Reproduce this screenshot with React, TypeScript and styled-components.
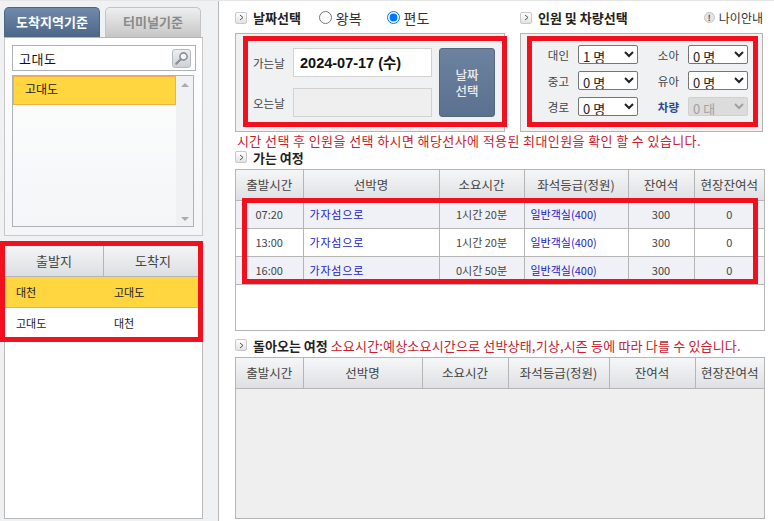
import * as React from 'react'
import styled, { createGlobalStyle } from 'styled-components'

const GlobalStyle = createGlobalStyle`
  html, body { margin: 0; padding: 0; background: #fff; }
  body {
    width: 774px;
    height: 521px;
    overflow: hidden;
    font-family: "Noto Sans CJK KR", "Noto Sans", sans-serif;
    color: #333;
  }
  * { box-sizing: border-box; }
`

const SPage = styled.div`
  display: flex;
  width: 774px;
  height: 521px;
  border-top: 1px solid #e6e6e6;
`

const SSidebar = styled.aside`
  width: 219px;
  height: 520px;
  flex: none;
  padding: 6px 15px 0 4px;
  background: #f0f1f3;
  border-right: 1px solid #b9b9b9;
  display: flex;
  flex-direction: column;
`

const STabs = styled.div`
  display: flex;
  gap: 5px;
  height: 30px;
`

const STab = styled.div<{ $active?: boolean }>`
  width: 96px;
  height: 30px;
  border: 1px solid ${({ $active }) => ($active ? '#4d6584' : '#c4c4c4')};
  border-bottom: 0;
  border-radius: 5px 5px 0 0;
  background: ${({ $active }) =>
    $active ? 'linear-gradient(#6f8aab, #4c6688)' : 'linear-gradient(#efefef, #c6c6c6)'};
  color: ${({ $active }) => ($active ? '#fff' : '#8a8a8a')};
  font-size: 13px;
  font-weight: 700;
  line-height: 28px;
  text-align: center;
`

const SSearchPanel = styled.div`
  width: 199px;
  height: 199px;
  padding: 7px 7px 0 7px;
  background: linear-gradient(#fff, #f4f5f7);
  border: 1px solid #c8c8c8;
  border-top: 1px solid #b5b5b5;
`

const SSearchBox = styled.div`
  width: 184px;
  height: 26px;
  padding: 0 4px 0 6px;
  display: flex;
  align-items: center;
  justify-content: space-between;
  background: #fff;
  border: 1px solid #aeb1b5;
  font-size: 13px;
  letter-spacing: 0.6px;
  color: #111;
`

const SSearchButton = styled.div`
  width: 19px;
  height: 19px;
  display: flex;
  align-items: center;
  justify-content: center;
  background: linear-gradient(#eceef0, #cfd2d6);
  border: 1px solid #b5b8bc;
  border-radius: 3px;
`

const SList = styled.div`
  display: flex;
  width: 182px;
  height: 152px;
  margin-top: 4px;
  border: 1px solid #aeb1b5;
`

const SListItems = styled.div`
  flex: 1;
`

const SListItem = styled.div`
  height: 29px;
  padding-left: 11px;
  background: #ffd540;
  border: 1px solid #f2ad4e;
  font-size: 12px;
  line-height: 24px;
  color: #222;
`

const SScrollTrack = styled.div`
  width: 17px;
  padding: 7px 0 5px;
  display: flex;
  flex-direction: column;
  justify-content: space-between;
  align-items: center;
  background: #f0f1f3;
`

const SArrow = styled.span<{ $down?: boolean }>`
  width: 0;
  height: 0;
  border-left: 4px solid transparent;
  border-right: 4px solid transparent;
  border-${({ $down }) => ($down ? 'top' : 'bottom')}: 4px solid #a8abaf;
`

const SRoutePanel = styled.div`
  position: relative;
  width: 199px;
  height: 278px;
  margin-top: 5px;
  background: #fff;
  border: 1px solid #b9b9b9;
`

const SRouteHead = styled.div`
  display: grid;
  grid-template-columns: 98px 1fr;
  height: 31px;
  margin-top: 4px;
  background: linear-gradient(#f4f5f6, #dcdfe2);
  border-bottom: 1px solid #b5b5b5;
`

const SRouteHeadCell = styled.div`
  font-size: 13px;
  line-height: 30px;
  text-align: center;
  color: #444;
  & + & { border-left: 1px solid #b5b5b5; }
`

const SRouteRow = styled.div<{ $active?: boolean }>`
  display: grid;
  grid-template-columns: 98px 1fr;
  height: ${({ $active }) => ($active ? 31 : 30)}px;
  padding-left: 11px;
  background: ${({ $active }) => ($active ? '#ffd540' : '#fff')};
  border-bottom: ${({ $active }) => ($active ? '1px solid #f2ad4e' : '0')};
  font-size: 11px;
  line-height: 30px;
  color: #222;
`

const SMark = styled.div<{ $top: number; $left: number; $width: number; $height: number }>`
  position: absolute;
  top: ${({ $top }) => $top}px;
  left: ${({ $left }) => $left}px;
  width: ${({ $width }) => $width}px;
  height: ${({ $height }) => $height}px;
  border: 5px solid #f2101f;
  pointer-events: none;
`

const SMain = styled.main`
  position: relative;
  flex: 1;
  padding: 7px 9px 0 16px;
`

const STopRow = styled.div`
  display: flex;
  gap: 15px;
`

const SDateGroup = styled.section`
  width: 270px;
`

const SPeopleGroup = styled.section`
  width: 243px;
`

const STitleRow = styled.div`
  display: flex;
  align-items: center;
  height: 19px;
`

const SChevronBox = styled.span`
  width: 12px;
  height: 12px;
  flex: none;
  margin-right: 6px;
  display: flex;
  align-items: center;
  justify-content: center;
  background: linear-gradient(#fff, #e2e2e2);
  border: 1px solid #c9c9c9;
  border-radius: 2px;
`

const STitle = styled.h3`
  margin: 0;
  font-size: 13px;
  font-weight: 700;
  color: #222;
  white-space: nowrap;
`

const SRadioLabel = styled.label<{ $gap: number }>`
  display: flex;
  align-items: center;
  gap: 4px;
  margin-left: ${({ $gap }) => $gap}px;
  font-size: 14px;
  color: #333;
  & input { margin: 0; width: 13px; height: 13px; }
`

const SAgeInfo = styled.div`
  display: flex;
  align-items: center;
  gap: 4px;
  margin-left: auto;
  font-size: 12px;
  color: #333;
`

const SInfoDot = styled.span`
  width: 11px;
  height: 11px;
  border-radius: 50%;
  background: #e4e4e4;
  border: 1px solid #c4c4c4;
  font-size: 8px;
  font-weight: 700;
  line-height: 9px;
  text-align: center;
  color: #444;
`

const SFormBox = styled.div`
  height: 99px;
  margin-top: 6px;
  background: #f0f1f3;
  border: 1px solid #b5b5b5;
`

const SDateForm = styled(SFormBox)`
  display: flex;
  padding: 14px 0 0 17px;
`

const SDateFields = styled.div`
  display: grid;
  grid-template-columns: 40px 139px;
  grid-auto-rows: 29px;
  row-gap: 11px;
  align-items: center;
  font-size: 11.5px;
  color: #444;
`

const SDateValue = styled.div<{ $disabled?: boolean }>`
  height: 29px;
  padding-left: 6px;
  background: ${({ $disabled }) => ($disabled ? '#efefef' : '#fff')};
  border: 1px solid #d2d2d2;
  font-family: "Liberation Sans", "Noto Sans CJK KR", sans-serif;
  font-size: 14.5px;
  font-weight: 700;
  line-height: 28px;
  color: #111;
`

const SDateButton = styled.div`
  width: 56px;
  height: 69px;
  margin-left: 7px;
  display: flex;
  flex-direction: column;
  align-items: center;
  justify-content: center;
  background: linear-gradient(#6d829e, #5b7190);
  border: 1px solid #56677f;
  border-radius: 3px;
  font-size: 12.5px;
  font-weight: 500;
  line-height: 16px;
  color: #e8edf3;
`

const SPeopleForm = styled(SFormBox)`
  display: grid;
  grid-template-columns: 48px 60px 50px 60px;
  grid-auto-rows: 19px;
  row-gap: 7px;
  align-content: start;
  align-items: center;
  padding: 11px 0 0 9px;
  font-size: 11.5px;
  color: #444;
`

const SPersonLabel = styled.span<{ $vehicle?: boolean }>`
  padding-right: 9px;
  text-align: right;
  color: ${({ $vehicle }) => ($vehicle ? '#2a4a94' : '#444')};
  font-weight: ${({ $vehicle }) => ($vehicle ? 700 : 400)};
`

const SSelect = styled.select`
  width: 60px;
  height: 19px;
  padding: 0;
  font-family: "Noto Sans CJK KR", sans-serif;
  font-size: 13px;
  color: #222;
  background: #fff;
  border: 1px solid #767676;
  border-radius: 2px;
  &:disabled {
    background: #dcdcdc;
    border-color: #d0d0d0;
    color: #a0a0a0;
    opacity: 1;
  }
`

const SNotice = styled.p`
  margin: 1px 0 0 2px;
  height: 16px;
  font-size: 13px;
  line-height: 16px;
  letter-spacing: 0.4px;
  color: #c8202e;
  white-space: nowrap;
`

const SSectionTitle = styled(STitleRow)<{ $gap?: number }>`
  height: 16px;
  margin-top: ${({ $gap }) => $gap ?? 0}px;
`

const SReturnNotice = styled.span`
  margin-left: 3px;
  font-size: 13px;
  letter-spacing: 0.18px;
  color: #c8202e;
  white-space: nowrap;
`

const STableFrame = styled.div<{ $empty?: boolean }>`
  height: 162px;
  margin-top: 4px;
  background: ${({ $empty }) => ($empty ? '#efefef' : '#fff')};
  border: 1px solid #b5b5b5;
`

const STable = styled.table`
  width: 100%;
  table-layout: fixed;
  border-collapse: collapse;
`

const SHeadCell = styled.th`
  height: 30px;
  padding: 0;
  background: linear-gradient(#f5f6f7, #dee0e3);
  border-bottom: 1px solid #b5b5b5;
  border-left: 1px solid #b5b5b5;
  font-size: 12.5px;
  font-weight: 400;
  color: #444;
  white-space: nowrap;
  &:first-child { border-left: 0; }
`

const SRow = styled.tr<{ $alt?: boolean }>`
  background: ${({ $alt }) => ($alt ? '#eff1f7' : '#fff')};
`

const SCell = styled.td<{ $link?: boolean; $wide?: boolean }>`
  height: 28px;
  padding: ${({ $link }) => ($link ? '0 0 0 6px' : '0')};
  border-bottom: 1px solid #b5b5b5;
  border-left: 1px solid #b5b5b5;
  font-size: 11px;
  letter-spacing: ${({ $wide }) => ($wide ? '0.8px' : '0')};
  text-align: ${({ $link }) => ($link ? 'left' : 'center')};
  color: ${({ $link }) => ($link ? '#2222cc' : '#444')};
  &:first-child { border-left: 0; }
`

const outboundWidths = [67, 136, 85, 104, 66, 70]
const returnWidths = [67, 119, 86, 101, 86, 69]
const columns = ['출발시간', '선박명', '소요시간', '좌석등급(정원)', '잔여석', '현장잔여석']

const trips = [
  { time: '07:20', duration: '1시간 20분' },
  { time: '13:00', duration: '1시간 20분' },
  { time: '16:00', duration: '0시간 50분' },
]

const Chevron = () => (
  <svg width="5" height="7" viewBox="0 0 5 7" fill="none">
    <path d="M1 1l3 2.5L1 6" stroke="#555" strokeWidth="1" />
  </svg>
)

const Magnifier = () => (
  <svg width="15" height="15" viewBox="0 0 15 15" fill="none">
    <circle cx="9.5" cy="5.5" r="3.6" stroke="#8b8f94" strokeWidth="1.6" fill="#f4f5f6" />
    <path d="M6.8 8.2L2.2 12.8" stroke="#8b8f94" strokeWidth="2.2" strokeLinecap="round" />
  </svg>
)

const Title = ({ children }: { children: React.ReactNode }) => (
  <>
    <SChevronBox>
      <Chevron />
    </SChevronBox>
    <STitle>{children}</STitle>
  </>
)

const TableHead = ({ widths }: { widths: number[] }) => (
  <>
    <colgroup>
      {widths.map((w, i) => (
        <col key={i} style={{ width: w }} />
      ))}
    </colgroup>
    <thead>
      <tr>
        {columns.map((c) => (
          <SHeadCell key={c}>{c}</SHeadCell>
        ))}
      </tr>
    </thead>
  </>
)

const PersonSelect = ({ value, unit = '명', disabled }: { value: number; unit?: string; disabled?: boolean }) => (
  <SSelect defaultValue={value} disabled={disabled}>
    <option value={value}>
      {value} {unit}
    </option>
  </SSelect>
)

const App = () => (
  <>
    <GlobalStyle />
    <SPage>
      <SSidebar>
        <STabs>
          <STab $active>도착지역기준</STab>
          <STab>터미널기준</STab>
        </STabs>
        <SSearchPanel>
          <SSearchBox>
            고대도
            <SSearchButton>
              <Magnifier />
            </SSearchButton>
          </SSearchBox>
          <SList>
            <SListItems>
              <SListItem>고대도</SListItem>
            </SListItems>
            <SScrollTrack>
              <SArrow />
              <SArrow $down />
            </SScrollTrack>
          </SList>
        </SSearchPanel>
        <SRoutePanel>
          <SRouteHead>
            <SRouteHeadCell>출발지</SRouteHeadCell>
            <SRouteHeadCell>도착지</SRouteHeadCell>
          </SRouteHead>
          <SRouteRow $active>
            <span>대천</span>
            <span>고대도</span>
          </SRouteRow>
          <SRouteRow>
            <span>고대도</span>
            <span>대천</span>
          </SRouteRow>
          <SMark $top={-1} $left={-5} $width={203} $height={101} />
        </SRoutePanel>
      </SSidebar>
      <SMain>
        <STopRow>
          <SDateGroup>
            <STitleRow>
              <Title>날짜선택</Title>
              <SRadioLabel $gap={18}>
                <input type="radio" name="trip" />
                왕복
              </SRadioLabel>
              <SRadioLabel $gap={25}>
                <input type="radio" name="trip" defaultChecked />
                편도
              </SRadioLabel>
            </STitleRow>
            <SDateForm>
              <SDateFields>
                <span>가는날</span>
                <SDateValue>2024-07-17 (수)</SDateValue>
                <span>오는날</span>
                <SDateValue $disabled />
              </SDateFields>
              <SDateButton>
                <span>날짜</span>
                <span>선택</span>
              </SDateButton>
            </SDateForm>
          </SDateGroup>
          <SPeopleGroup>
            <STitleRow>
              <Title>인원 및 차량선택</Title>
              <SAgeInfo>
                <SInfoDot>!</SInfoDot>
                나이안내
              </SAgeInfo>
            </STitleRow>
            <SPeopleForm>
              <SPersonLabel>대인</SPersonLabel>
              <PersonSelect value={1} />
              <SPersonLabel>소아</SPersonLabel>
              <PersonSelect value={0} />
              <SPersonLabel>중고</SPersonLabel>
              <PersonSelect value={0} />
              <SPersonLabel>유아</SPersonLabel>
              <PersonSelect value={0} />
              <SPersonLabel>경로</SPersonLabel>
              <PersonSelect value={0} />
              <SPersonLabel $vehicle>차량</SPersonLabel>
              <PersonSelect value={0} unit="대" disabled />
            </SPeopleForm>
          </SPeopleGroup>
        </STopRow>
        <SNotice>시간 선택 후 인원을 선택 하시면 해당선사에 적용된 최대인원을 확인 할 수 있습니다.</SNotice>
        <SSectionTitle>
          <Title>가는 여정</Title>
        </SSectionTitle>
        <STableFrame>
          <STable>
            <TableHead widths={outboundWidths} />
            <tbody>
              {trips.map((t, i) => (
                <SRow key={t.time} $alt={i % 2 === 0}>
                  <SCell>{t.time}</SCell>
                  <SCell $link $wide>
                    가자섬으로
                  </SCell>
                  <SCell>{t.duration}</SCell>
                  <SCell $link>일반객실(400)</SCell>
                  <SCell>300</SCell>
                  <SCell>0</SCell>
                </SRow>
              ))}
            </tbody>
          </STable>
        </STableFrame>
        <SSectionTitle $gap={6}>
          <Title>돌아오는 여정</Title>
          <SReturnNotice>소요시간:예상소요시간으로 선박상태,기상,시즌 등에 따라 다를 수 있습니다.</SReturnNotice>
        </SSectionTitle>
        <STableFrame $empty>
          <STable>
            <TableHead widths={returnWidths} />
          </STable>
        </STableFrame>
        <SMark $top={197} $left={23} $width={516} $height={86} />
        <SMark $top={35} $left={24} $width={264} $height={91} />
        <SMark $top={35} $left={308} $width={231} $height={91} />
      </SMain>
    </SPage>
  </>
)

export default App
